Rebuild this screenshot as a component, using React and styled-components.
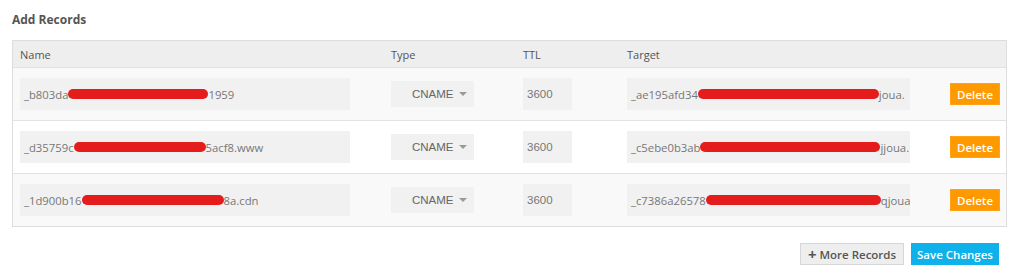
import React from "react";
import styled, { createGlobalStyle } from "styled-components";

const GlobalStyle = createGlobalStyle`
  body {
    margin: 0;
    background: #fff;
    font-family: "Open Sans", "DejaVu Sans", sans-serif;
  }
`;

const Page = styled.div`
  padding: 12px 17px 0 12px;
`;

const Title = styled.h3`
  margin: 0 0 12px;
  font-size: 12px;
  line-height: 16px;
  font-weight: 700;
  color: #555;
`;

const Table = styled.div`
  border: 1px solid #dddddd;
`;

const Row = styled.div`
  display: grid;
  grid-template-columns: 371px 132px 104px 323px 50px;
  align-items: center;
  padding: 0 6px 0 7px;
  height: ${(p) => (p.head ? "26px" : "52px")};
  background: ${(p) => (p.head ? "#eeeeee" : p.alt ? "#f9f9f9" : "#ffffff")};
  border-bottom: ${(p) => (p.last ? "none" : "1px solid #e2e2e2")};
`;

const HeadCell = styled.div`
  font-size: 11px;
  color: #555;
`;

const Field = styled.div`
  box-sizing: border-box;
  width: ${(p) => p.w}px;
  height: 32px;
  padding-left: 4px;
  background: #f1f1f1;
  display: flex;
  align-items: center;
  overflow: hidden;
  white-space: nowrap;
  font-size: 11.3px;
  color: #777;
`;

const Plain = styled(Field)`
  font-family: "Liberation Sans", Arial, sans-serif;
  font-size: 11.5px;
`;

const Select = styled.div`
  box-sizing: border-box;
  width: 83px;
  height: 26px;
  padding-left: 21px;
  background: #f1f1f1;
  display: flex;
  align-items: center;
  gap: 5px;
  font-family: "Liberation Sans", Arial, sans-serif;
  font-size: 11.5px;
  color: #666;
`;

const Caret = styled.span`
  width: 0;
  height: 0;
  border-left: 4px solid transparent;
  border-right: 4px solid transparent;
  border-top: 4px solid #999;
`;

const Redact = styled.span`
  display: inline-block;
  flex: none;
  width: ${(p) => p.w}px;
  height: 10px;
  border-radius: 5px;
  background: #e41c1c;
`;

const Button = styled.button`
  box-sizing: border-box;
  width: ${(p) => p.w}px;
  height: 22px;
  padding: 0;
  border: 1px solid ${(p) => p.border};
  background: ${(p) => p.bg};
  color: ${(p) => p.color};
  font-family: "Open Sans", sans-serif;
  font-size: 11.5px;
  font-weight: 600;
  cursor: pointer;
  display: inline-flex;
  align-items: center;
  justify-content: center;
  gap: 3px;
`;

const Plus = styled.span`
  font-size: 15px;
  font-weight: 700;
  line-height: 1;
`;

const Footer = styled.div`
  display: flex;
  justify-content: flex-end;
  gap: 7px;
  margin-top: 16px;
  padding-right: 8px;
`;

const records = [
  {
    name: ["_b803da", 140, "1959"],
    target: ["_ae195afd34", 181, "joua."],
  },
  {
    name: ["_d35759c", 132, "5acf8.www"],
    target: ["_c5ebe0b3ab", 180, "jjoua."],
  },
  {
    name: ["_1d900b16", 142, "8a.cdn"],
    target: ["_c7386a26578", 175, "qjoua"],
  },
];

const Masked = ({ parts }) => (
  <>
    <span>{parts[0]}</span>
    <Redact w={parts[1]} />
    <span>{parts[2]}</span>
  </>
);

export default function App() {
  return (
    <Page>
      <GlobalStyle />
      <Title>Add Records</Title>
      <Table>
        <Row head>
          <HeadCell>Name</HeadCell>
          <HeadCell>Type</HeadCell>
          <HeadCell>TTL</HeadCell>
          <HeadCell>Target</HeadCell>
          <HeadCell />
        </Row>
        {records.map((r, i) => (
          <Row key={i} alt={i % 2 === 0} last={i === records.length - 1}>
            <Field w={330}>
              <Masked parts={r.name} />
            </Field>
            <Select>
              CNAME <Caret />
            </Select>
            <Plain w={49}>3600</Plain>
            <Field w={283}>
              <Masked parts={r.target} />
            </Field>
            <Button w={50} bg="#ff9900" border="#ffa31a" color="#fff">
              Delete
            </Button>
          </Row>
        ))}
      </Table>
      <Footer>
        <Button w={104} bg="#eeeeee" border="#d6d6d6" color="#555">
          <Plus>+</Plus> More Records
        </Button>
        <Button w={88} bg="#0fb1ea" border="#0fb1ea" color="#fff">
          Save Changes
        </Button>
      </Footer>
    </Page>
  );
}
